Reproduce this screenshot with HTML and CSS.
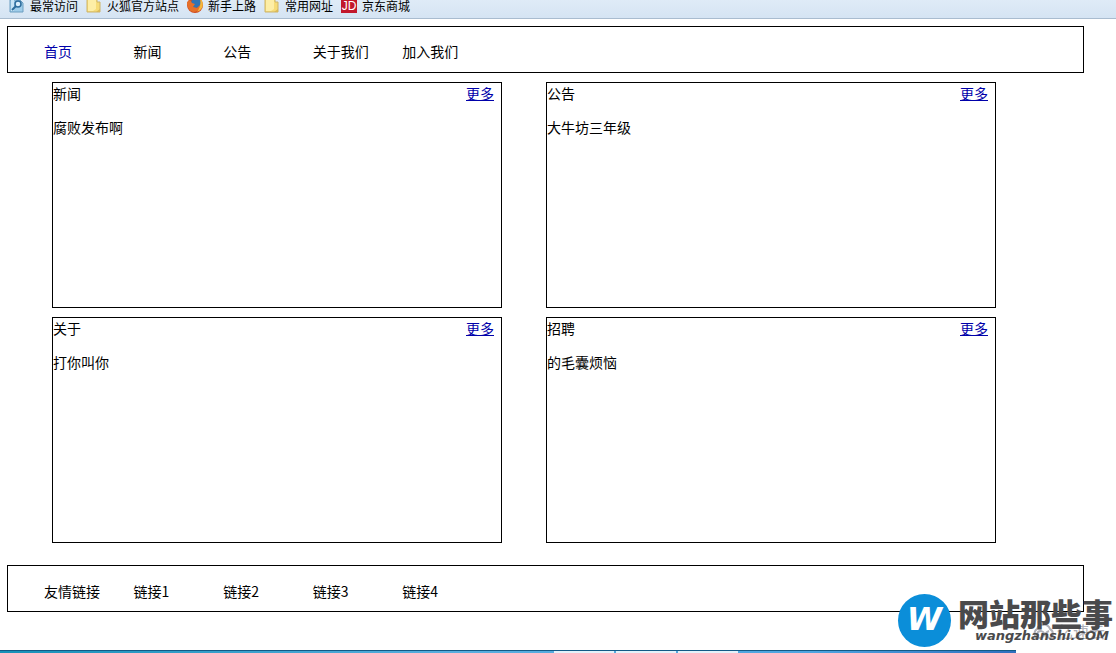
FILE: index.html
```html
<!DOCTYPE html>
<html lang="zh-CN">
<head>
<meta charset="utf-8">
<title>首页</title>
<link rel="stylesheet" href="styles.css">
</head>
<body>
<nav class="bookmarks" aria-label="书签">
  <a class="bookmark" href="#"><svg class="bookmark-icon" viewBox="0 0 16 14"><path d="M1 0h10l3 3v9H1z" fill="#9fcdea" stroke="#6b9dc0"/><path d="M2 0h3v11H2z" fill="#c7e4f6"/><circle cx="9" cy="4" r="3" fill="#d9effc" stroke="#2c6c9c" stroke-width="1.5"/><path d="M7 6l-4 4" stroke="#2c6c9c" stroke-width="2"/></svg>最常访问</a>
  <a class="bookmark" href="#"><svg class="bookmark-icon" viewBox="0 0 16 14"><path d="M1-2h10v4h3v10H1z" fill="#f6dc78" stroke="#cdb469"/><path d="M2-1h8v10l-3 2H2z" fill="#fdeea6"/><path d="M10 12l4-3v3z" fill="#d9b95a"/></svg>火狐官方站点</a>
  <a class="bookmark" href="#"><svg class="bookmark-icon" viewBox="0 0 16 14"><circle cx="8" cy="5" r="8" fill="#cf4a1d"/><circle cx="9" cy="3" r="5" fill="#2f74b5"/><path d="M0 2l3-2 2 3 3 1-2 3 4 1 4-4c1 4-3 8-7 8S0 8 0 2z" fill="#e5702a"/><path d="M13-2c5 5 3 12-3 14 3-4 4-8 3-14z" fill="#f5b93c"/></svg>新手上路</a>
  <a class="bookmark" href="#"><svg class="bookmark-icon" viewBox="0 0 16 14"><path d="M1-2h10v4h3v10H1z" fill="#f6dc78" stroke="#cdb469"/><path d="M2-1h8v10l-3 2H2z" fill="#fdeea6"/><path d="M10 12l4-3v3z" fill="#d9b95a"/></svg>常用网址</a>
  <a class="bookmark" href="#"><span class="bookmark-icon jd">JD</span>京东商城</a>
</nav>
<div class="page">
  <nav class="strip strip-top">
    <ul class="strip-list">
      <li><a class="current" href="#">首页</a></li>
      <li><a href="#">新闻</a></li>
      <li><a href="#">公告</a></li>
      <li><a href="#">关于我们</a></li>
      <li><a href="#">加入我们</a></li>
    </ul>
  </nav>
  <main class="panels">
    <section class="panel"><header class="panel-head"><span>新闻</span><a href="#">更多</a></header><p>腐败发布啊</p></section>
    <section class="panel"><header class="panel-head"><span>公告</span><a href="#">更多</a></header><p>大牛坊三年级</p></section>
    <section class="panel"><header class="panel-head"><span>关于</span><a href="#">更多</a></header><p>打你叫你</p></section>
    <section class="panel"><header class="panel-head"><span>招聘</span><a href="#">更多</a></header><p>的毛囊烦恼</p></section>
  </main>
  <footer class="strip">
    <ul class="strip-list">
      <li>友情链接</li>
      <li><a href="#">链接1</a></li>
      <li><a href="#">链接2</a></li>
      <li><a href="#">链接3</a></li>
      <li><a href="#">链接4</a></li>
    </ul>
  </footer>
</div>
<div class="taskbar"><span class="tab"></span><span class="tab"></span><span class="tab"></span></div>
<div class="cloud-mark"><svg class="cloud" viewBox="0 0 26 18"><path d="M7 16a5 5 0 0 1-1-9 7 7 0 0 1 13 0 5 5 0 0 1 0 9c-5 0-5-7-9-7-5 0-5 7-1 7 4 0 5-6 9-7" fill="none" stroke="currentColor" stroke-width="2"/></svg>亿速云</div>
<div class="site-mark"><span class="site-badge">W</span><span class="site-text"><span class="site-name">网站那些事</span><span class="site-url">wangzhanshi.COM</span></span></div>
</body>
</html>
```
FILE: styles.css
```css
* { box-sizing: border-box; }
body {
  margin: 0;
  min-height: 100vh;
  display: flex;
  flex-direction: column;
  background: #fff;
  color: #000;
  font: 14px/20px "Noto Sans CJK SC", sans-serif;
}
a { color: inherit; text-decoration: none; }
ul, p { margin: 0; padding: 0; list-style: none; }
.bookmarks {
  display: flex;
  gap: 8px;
  height: 19px;
  padding-left: 9px;
  background: linear-gradient(#dfebf7, #d5e4f3);
  border-bottom: 1px solid #a9bccf;
  font-size: 12px;
  line-height: 11px;
  white-space: nowrap;
}
.bookmark { display: flex; gap: 5px; }
.bookmark-icon { width: 16px; height: 14px; flex: none; }
.jd {
  height: 13px;
  background: #c2182b;
  color: #fff;
  font: 12px/12px "Liberation Sans", sans-serif;
  text-align: center;
}
.page { flex: 1; padding: 7px 32px 0 7px; }
.strip { border: 1px solid #000; padding: 15px 0 10px; }
.strip-top { padding: 14px 0 11px; }
.strip-list { display: grid; grid-template-columns: repeat(12, 1fr); white-space: nowrap; }
.strip-list li { min-width: 0; padding-left: 36px; }
.current { color: #00a; }
.panels {
  display: grid;
  grid-template-columns: 1fr 1fr;
  gap: 9px 44px;
  margin: 9px 88px 22px 45px;
}
.panel { min-height: 226px; border: 1px solid #000; }
.panel-head { display: flex; justify-content: space-between; padding-right: 7px; margin-bottom: 14px; }
.panel-head a { color: #00a; text-decoration: underline; }
.taskbar {
  display: flex;
  justify-content: center;
  gap: 2px;
  height: 3px;
  margin-right: 100px;
  padding-left: 276px;
  border-top: 1px solid #125a86;
  background: linear-gradient(90deg, #1791b8, #59aede 45%, #4fa5e0 80%, #2f6fbe);
}
.tab { width: 60px; background: #e4f2fa; }
.cloud-mark {
  position: absolute;
  right: 11px;
  bottom: 12px;
  display: flex;
  align-items: center;
  color: #b0b0b8;
  font-size: 16px;
}
.cloud { width: 26px; height: 18px; }
.site-mark {
  position: absolute;
  right: 3px;
  bottom: 6px;
  display: flex;
  align-items: center;
  gap: 7px;
}
.site-badge {
  width: 53px;
  height: 53px;
  border-radius: 50%;
  background: #0b8ed9;
  color: #fff;
  font: italic bold 32px/51px "DejaVu Sans", sans-serif;
  text-align: center;
}
.site-text {
  display: flex;
  flex-direction: column;
  color: #4a4a4c;
}
.site-name {
  font-size: 31px;
  line-height: 28px;
  font-weight: 900;
}
.site-url {
  padding: 2px 4px 0 0;
  text-align: right;
  font: italic bold 13px/14px "DejaVu Sans", sans-serif;
}
```
